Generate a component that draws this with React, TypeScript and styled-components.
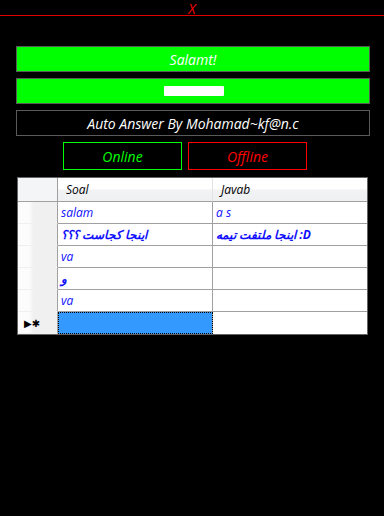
import React from 'react';
import styled, { createGlobalStyle } from 'styled-components';

const GlobalStyle = createGlobalStyle`
  html, body {
    margin: 0;
    padding: 0;
    background: #000;
  }
  body {
    width: 384px;
    height: 516px;
    overflow: hidden;
    font-family: "Open Sans", "DejaVu Sans", sans-serif;
  }
`;

const Window = styled.div`
  display: flex;
  flex-direction: column;
  width: 384px;
  height: 516px;
  background: #000;
`;

const TitleBar = styled.div`
  height: 15px;
  border-bottom: 1px solid #e00000;
  display: flex;
  justify-content: center;
  align-items: center;
`;

const CloseText = styled.span`
  color: #ff0000;
  font-style: italic;
  font-size: 14px;
  line-height: 15px;
  margin-top: 2px;
`;

const Body = styled.div`
  display: flex;
  flex-direction: column;
  padding: 30px 14px 0 16px;
  gap: 6px;
`;

const Banner = styled.div<{ $fill?: string }>`
  height: 24px;
  border: 1px solid #5a5a5a;
  background: ${(p) => p.$fill || '#000'};
  color: #fff;
  font-style: italic;
  font-size: 14px;
  display: flex;
  justify-content: center;
  align-items: center;
`;

const Hidden = styled.span`
  display: inline-block;
  width: 60px;
  height: 10px;
  background: #fff;
  border-radius: 1px;
  margin-left: 2px;
`;

const StatusRow = styled.div`
  display: flex;
  gap: 6px;
  padding-left: 47px;
`;

const StatusButton = styled.div<{ $color: string }>`
  width: 117px;
  height: 26px;
  border: 1px solid ${(p) => p.$color};
  color: ${(p) => p.$color};
  font-style: italic;
  font-size: 14px;
  display: flex;
  justify-content: center;
  align-items: center;
`;

const Grid = styled.div`
  margin: 1px 0 0 1px;
  width: 349px;
  border: 1px solid #646464;
  background: #fff;
  display: grid;
  grid-template-columns: 40px 155px 1fr;
  font-size: 12px;
  font-style: italic;
`;

const HeadCell = styled.div<{ $corner?: boolean }>`
  height: 24px;
  border-bottom: 1px solid #a0a0a0;
  border-right: 1px solid ${(p) => (p.$corner ? '#a0a0a0' : '#e3e3e3')};
  background: ${(p) =>
    p.$corner
      ? '#f4f5f7'
      : 'linear-gradient(#ffffff 0%, #ffffff 45%, #f1f2f4 55%, #eef0f2 100%)'};
  color: #000;
  display: flex;
  align-items: center;
  padding-left: 8px;
  box-sizing: border-box;
  &:nth-child(3) {
    border-right: none;
  }
`;

const RowHead = styled.div`
  height: 22px;
  box-sizing: border-box;
  border-bottom: 1px solid #f0f0f0;
  border-right: 1px solid #a0a0a0;
  background: linear-gradient(90deg, #fcfcfc 0%, #fcfcfc 28%, #f0f0f0 40%, #f0f0f0 100%);
  display: flex;
  align-items: center;
  padding-left: 6px;
  font-style: normal;
  font-size: 10px;
  color: #000;
`;

const Cell = styled.div<{ $selected?: boolean; $last?: boolean; $rtl?: boolean }>`
  height: 22px;
  box-sizing: border-box;
  border-bottom: ${(p) => (p.$last ? 'none' : '1px solid #a0a0a0')};
  border-right: 1px solid #a0a0a0;
  color: #1010ff;
  display: flex;
  align-items: center;
  padding-left: 3px;
  white-space: nowrap;
  overflow: hidden;
  font-weight: ${(p) => (p.$rtl ? 700 : 400)};
  background: ${(p) => (p.$selected ? '#3399ff' : '#fff')};
  outline: ${(p) => (p.$selected ? '1px dotted #000' : 'none')};
  outline-offset: -1px;
  &:nth-child(3n) {
    border-right: none;
  }
`;

const rows: [string, string][] = [
  ['salam', 'a s'],
  ['اینجا کجاست ؟؟؟', 'اینجا ملتفت تیمه :D'],
  ['va', ''],
  ['و', ''],
  ['va', ''],
];

const isRtl = (s: string) => /[\u0600-\u06ff]/.test(s);

export default function App() {
  return (
    <Window>
      <GlobalStyle />
      <TitleBar>
        <CloseText>X</CloseText>
      </TitleBar>
      <Body>
        <Banner $fill="#00ff00">Salamt!</Banner>
        <Banner $fill="#00ff00">
          <Hidden />
        </Banner>
        <Banner>Auto Answer By Mohamad~kf@n.c</Banner>
        <StatusRow>
          <StatusButton $color="#00ff00">Online</StatusButton>
          <StatusButton $color="#ff0000">Offline</StatusButton>
        </StatusRow>
        <Grid>
          <HeadCell $corner />
          <HeadCell>Soal</HeadCell>
          <HeadCell>Javab</HeadCell>
          {rows.map(([q, a], i) => (
            <React.Fragment key={i}>
              <RowHead />
              <Cell $rtl={isRtl(q)}>{q}</Cell>
              <Cell $rtl={isRtl(a)}>{a}</Cell>
            </React.Fragment>
          ))}
          <RowHead>▶✱</RowHead>
          <Cell $selected $last />
          <Cell $last />
        </Grid>
      </Body>
    </Window>
  );
}
